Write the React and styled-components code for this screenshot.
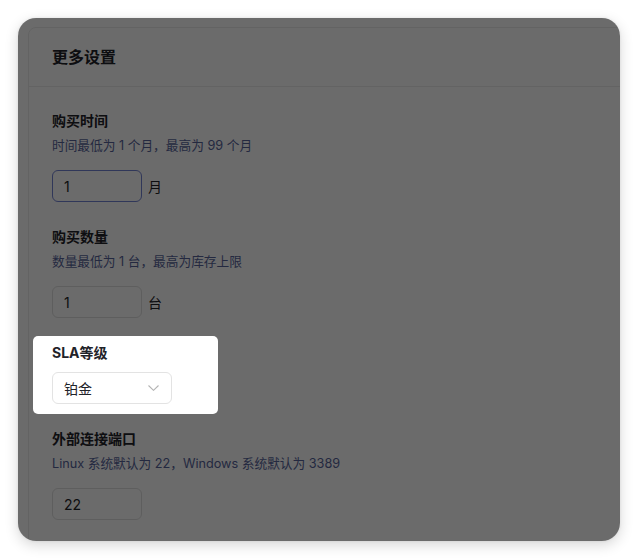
import React from 'react';
import styled, { createGlobalStyle } from 'styled-components';

const GlobalStyle = createGlobalStyle`
  html, body {
    margin: 0;
    padding: 0;
    background: #ffffff;
  }
  body {
    font-family: Inter, "Noto Sans CJK SC", sans-serif;
    color: #1f2329;
  }
`

const Page = styled.div`
  width: 638px;
  height: 560px;
  padding: 18px;
  box-sizing: border-box;
`
const Window = styled.div`
  width: 602px;
  height: 523px;
  box-sizing: border-box;
  padding: 9px 0 0 10px;
  border-radius: 18px;
  background: #ffffff;
  overflow: hidden;
  box-shadow: 0 4px 14px rgba(0, 0, 0, 0.16), 0 0 3px rgba(0, 0, 0, 0.08);
`
const Card = styled.div`
  width: 660px;
  background: #ffffff;
  border: 1px solid #ececec;
  border-radius: 8px;
`
const CardHeader = styled.div`
  padding: 18px 23px 18px;
  border-bottom: 1px solid #ececec;
`
const Title = styled.h3`
  margin: 0;
  font-size: 16px;
  line-height: 22px;
  font-weight: 700;
  color: #1f2329;
`
const CardBody = styled.div`
  padding: 24px 23px 40px;
  display: flex;
  flex-direction: column;
  gap: 25px;
`
const Field = styled.div`
  display: flex;
  flex-direction: column;
`
// white cut-out over the dimmed page, its shadow is the dim layer
const Spotlight = styled.div`
  position: relative;
  z-index: 1;
  align-self: flex-start;
  width: 120px;
  margin: -7px -46px -10px -19px;
  padding: 7px 46px 10px 19px;
  background: #ffffff;
  border-radius: 5px;
  box-shadow: 0 0 0 1200px rgba(0, 0, 0, 0.58);
`
const Label = styled.div`
  font-size: 14px;
  line-height: 20px;
  font-weight: 700;
  color: #1f2329;
`
const Hint = styled.div`
  margin-top: 5px;
  font-size: 12.7px;
  line-height: 20px;
  color: #56639a;
`
const Row = styled.div`
  margin-top: ${p => (p.$afterHint ? '14px' : '9px')};
  display: flex;
  align-items: center;
  gap: 6px;
`
const Input = styled.div`
  width: 90px;
  height: 32px;
  box-sizing: border-box;
  padding: 0 11px;
  display: flex;
  align-items: center;
  border: 1px solid ${p => (p.$focused ? '#7484d4' : '#e0e0e0')};
  border-radius: 6px;
  font-size: 14px;
  color: #1f2329;
`
const Unit = styled.span`
  font-size: 14px;
  color: #1f2329;
`
const Select = styled.div`
  width: 120px;
  height: 32px;
  box-sizing: border-box;
  padding: 0 12px 0 11px;
  display: flex;
  align-items: center;
  justify-content: space-between;
  border: 1px solid #e3e3e3;
  border-radius: 6px;
  font-size: 14px;
  color: #1f2329;
`
const Chevron = () => (
  <svg width="11" height="6" viewBox="0 0 11 6" fill="none">
    <path d="M0.5 0.5 L5.5 5.3 L10.5 0.5" stroke="#b4b4b4" strokeWidth="1.1" />
  </svg>
)

const fields = [
  { label: '购买时间', hint: '时间最低为 1 个月，最高为 99 个月', value: '1', unit: '月', focused: true },
  { label: '购买数量', hint: '数量最低为 1 台，最高为库存上限', value: '1', unit: '台' },
  { label: 'SLA等级', select: '铂金' },
  { label: '外部连接端口', hint: 'Linux 系统默认为 22，Windows 系统默认为 3389', value: '22' },
]

const App = () => {
  return (
    <>
      <GlobalStyle />
      <Page>
        <Window>
          <Card>
            <CardHeader>
              <Title>更多设置</Title>
            </CardHeader>
            <CardBody>
              {fields.map(f =>
                f.select ? (
                  <Spotlight key={f.label}>
                    <Field>
                      <Label>{f.label}</Label>
                      <Row>
                        <Select>
                          <span>{f.select}</span>
                          <Chevron />
                        </Select>
                      </Row>
                    </Field>
                  </Spotlight>
                ) : (
                  <Field key={f.label}>
                    <Label>{f.label}</Label>
                    <Hint>{f.hint}</Hint>
                    <Row $afterHint>
                      <Input $focused={f.focused}>{f.value}</Input>
                      {f.unit && <Unit>{f.unit}</Unit>}
                    </Row>
                  </Field>
                )
              )}
            </CardBody>
          </Card>
        </Window>
      </Page>
    </>
  )
}

export default App
